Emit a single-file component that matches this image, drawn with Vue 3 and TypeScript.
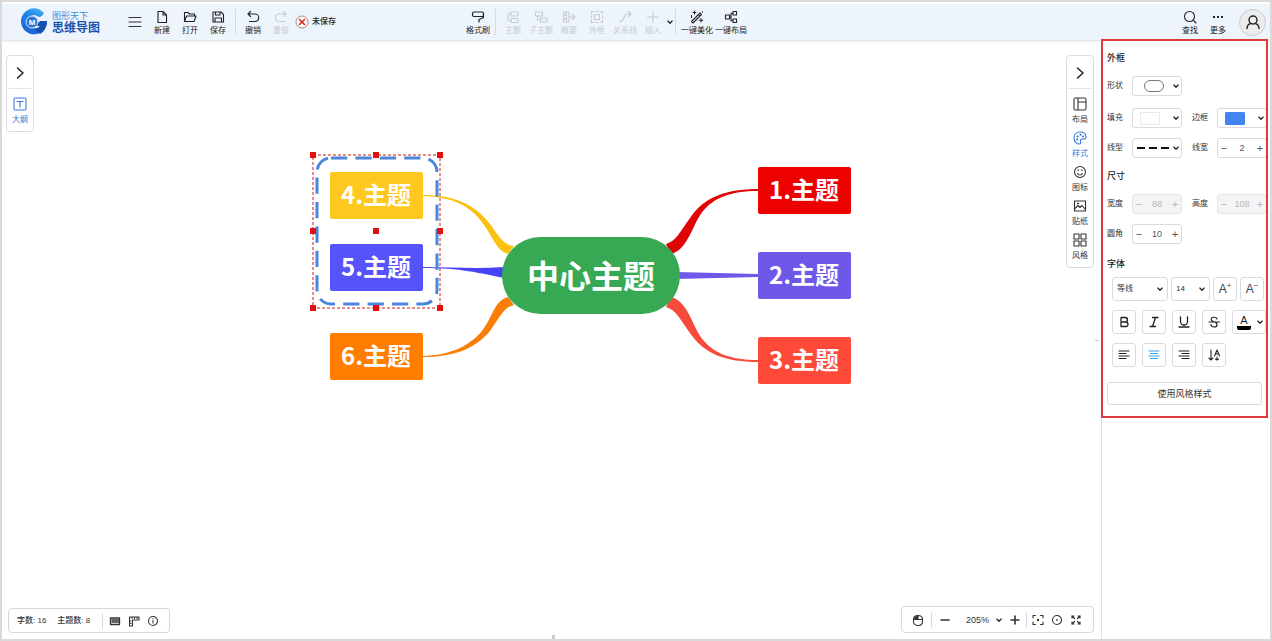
<script setup lang="ts">
import { h, ref } from 'vue'

type Shape = { d: string; fill?: boolean; w?: number }
type Tool = { icon: string; label: string; disabled?: boolean }

const shapes: Record<string, Shape[]> = {
  menu: [{ d: 'M2 3.5h12M2 8h12M2 12.5h12' }],
  file: [{ d: 'M4 2.5h5l3.5 3.5v7.5H4zM9 2.5V6h3.5' }],
  open: [{ d: 'M2.5 12.5v-9h3.5l1.5 1.5h5v2M2.5 12.5l2-5.5h9.5l-2 5.5z' }],
  save: [{ d: 'M3 3h8l2.5 2.5V13H3zM5.5 3v3h4.5V3M5 13V9h6.5v4' }],
  undo: [{ d: 'M5.5 2.5L3 5l2.5 2.5M3 5h7a3.5 3.5 0 0 1 0 7.5H4.5' }],
  redo: [{ d: 'M10.5 2.5L13 5l-2.5 2.5M13 5H6a3.5 3.5 0 0 0 0 7.5h5.5' }],
  brush: [{ d: 'M4 3h8q1.500 0 1.500 1.500v1.500q0 1.500-1.500 1.500H4q-1.500 0-1.500-1.500V4.500Q2.500 3 4 3zM13.500 6.500v2L9 10.500v2.500', w: 1.2 }],
  topic: [{ d: 'M6 3h7v4H6zM6 9.500h7v4H6zM6 5H3v6.500h3' }],
  subtopic: [{ d: 'M2.500 3h7v4h-7zM7.500 9h6.500v4H7.500zM4.500 7v4h3' }],
  summary: [{ d: 'M2.500 3h3v3h-3zM2.500 10h3v3h-3zM2.500 6.500h3v3h-3zM6 3h2v10H6M8 8h6M11.500 5.500L14 8l-2.500 2.500' }],
  frame: [
    { d: 'M2.500 5V2.500H5M7 2.500h2M11 2.500h2.500V5M13.500 7v2M13.500 11v2.500H11M9 13.500H7M5 13.500H2.500V11M2.500 9V7' },
    { d: 'M5.500 5.500h5v5h-5z' },
  ],
  relation: [{ d: 'M2 12.500h1.500C8 12.500 6 5 10.500 5H14M11.500 2.500L14 5l-2.500 2.500' }],
  plus: [{ d: 'M8 2.500v11M2.500 8h11' }],
  magic: [{ d: 'M2.500 12.500L11 4l1.500 1.500L4 14zM9.500 5.500L11 7M5.500 2v3M4 3.500h3M2.500 6.500v2M12 9.500v3.500M10.200 11.200h3.600M13.500 2.500v.5' }],
  layout: [{ d: 'M2.500 6h4v4h-4zM10 2.500h3.500V6H10zM10 10h3.500v3.500H10zM6.500 8H8M10 4.300H8v7.400h2' }],
  search: [{ d: 'M12.500 7.500a5 5 0 1 1-10 0a5 5 0 0 1 10 0zM11 11l3 3' }],
  more: [{ d: 'M3 7h2v2H3zM7 7h2v2H7zM11 7h2v2h-2z', fill: true }],
  user: [{ d: 'M12 6a4 4 0 1 1-8 0a4 4 0 0 1 8 0zM2 14.500c0-2.500 1.500-4.500 4-5.200M14 14.500c0-2.500-1.500-4.500-4-5.200', w: 1.4 }],
  right: [{ d: 'M5.500 3L11 8l-5.500 5', w: 1.5 }],
  down: [{ d: 'M4.500 6.500L8 10l3.500-3.500', w: 2 }],
  outline: [{ d: 'M3.500 2h9q1.500 0 1.500 1.500v9q0 1.500-1.500 1.500h-9Q2 14 2 12.500v-9Q2 2 3.500 2zM5 5.500h6M8 5.500V11' }],
  panel: [{ d: 'M3.500 2h9q1.500 0 1.500 1.500v9q0 1.500-1.500 1.500h-9Q2 14 2 12.500v-9Q2 2 3.500 2zM6 2v12M6 6h8' }],
  palette: [
    { d: 'M8 2C4.500 2 2 4.500 2 8s2.500 6 5.500 6c1.500 0 1.500-1.500 1-2.500c-.5-1.500.5-2.500 2-2.500h2c1.500 0 1.500-1 1.500-2C13.800 4 11.500 2 8 2z' },
    { d: 'M5.500 6.500h.1M8.500 4.800h.1M11 6.500h.1M5 9.500h.1', w: 2 },
  ],
  smile: [
    { d: 'M13.500 8a5.500 5.500 0 1 1-11 0a5.500 5.500 0 0 1 11 0zM5.500 9.500c1 2 4 2 5 0' },
    { d: 'M6.200 6.200h.1M9.800 6.200h.1', w: 1.600 },
  ],
  image: [{ d: 'M2.500 3h11v10h-11zM2.500 11l3.500-3.500l2 2l2-2l3.500 4' }, { d: 'M5.500 5.500h1', w: 1.300 }],
  grid: [{ d: 'M2 2h5v5H2zM9 2h5v5H9zM2 9h5v5H2zM9 9h5v5H9z' }],
  bold: [{ d: 'M5 3.500h4q2.500 0 2.500 2.200T9 8H5zM5 8h4.500q2.500 0 2.500 2.300t-2.500 2.200H5z', w: 1.300 }],
  italic: [{ d: 'M6.500 3.500h5.500M4 12.500h5.500M9.500 3.500l-3 9', w: 1.300 }],
  underline: [{ d: 'M4.500 3v4.500a3.500 3.500 0 0 0 7 0V3M3 13h10', w: 1.300 }],
  strike: [{ d: 'M11 5c-.5-2.200-5.500-2.500-5.800 0c-.2 2 2 2.500 3 3c4 1 3.500 5 0 5c-2 0-3.200-1-3.400-2.500M3 8h10.500', w: 1.200 }],
  alignleft: [{ d: 'M3 4h10M3 6.500h7M3 9h10M3 11.500h7', w: 1.200 }],
  aligncenter: [{ d: 'M3 4h10M4.500 6.500h7M3 9h10M4.500 11.500h7', w: 1.200 }],
  alignright: [{ d: 'M3 4h10M6 6.500h7M3 9h10M6 11.500h7', w: 1.200 }],
  textdown: [{ d: 'M5 3v10M3 11l2 2l2-2M8.500 9L11 3l2.500 6M9.300 7h3.400M11 10v3M9.500 12l1.500 1l1.500-1' }],
  keyboard: [{ d: 'M3.500 5h9v6.500h-9zM5 7h6.500M5 9h6.500', w: 1.300 }],
  ruler: [{ d: 'M3.500 4h9.500v3H6.500v6h-3zM6 4v1.500M8.500 4v1.500M11 4v1.500M3.500 8H5M3.500 10.500H5' }],
  info: [{ d: 'M12.500 8a4.500 4.500 0 1 1-9 0a4.500 4.500 0 0 1 9 0zM8 7.500v2.500M8 5.600v.1' }],
  mouse: [
    { d: 'M3.500 7.500C3.500 4.500 5 3.500 8 3.500s4.500 1 4.500 4v2c0 2.500-2 4-4.500 4s-4.500-1.500-4.500-4zM3.500 7.500h9M8 3.500v4' },
    { d: 'M4 7.500C4 5 5 4 8 4v3.500z', fill: true },
  ],
  minus: [{ d: 'M4 8h8', w: 1.600 }],
  add: [{ d: 'M8 4v8M4 8h8', w: 1.600 }],
  fit: [
    { d: 'M3 6V3.500h2.500M10.500 3.500H13V6M13 10v2.500h-2.500M5.500 12.500H3V10' },
    { d: 'M7 7h2v2H7z', fill: true },
  ],
  locate: [{ d: 'M12.500 8a4.500 4.500 0 1 1-9 0a4.500 4.500 0 0 1 9 0z' }, { d: 'M7.200 7.200h1.600v1.600H7.200z', fill: true }],
  expand: [{ d: 'M4 6V4h2M4 4l2.500 2.500M10 4h2v2M12 4L9.500 6.500M12 10v2h-2M12 12L9.500 9.500M6 12H4v-2M4 12l2.500-2.500', w: 1.200 }],
}

const Icon = (props: { name: string }) =>
  h(
    'svg',
    { viewBox: '0 0 16 16', width: 16, height: 16, 'aria-hidden': 'true' },
    shapes[props.name].map((s) =>
      h('path', {
        d: s.d,
        fill: s.fill ? 'currentColor' : 'none',
        stroke: s.fill ? 'none' : 'currentColor',
        'stroke-width': s.w ?? 1.1,
        'stroke-linecap': 'round',
        'stroke-linejoin': 'round',
      }),
    ),
  )

const fileTools: Tool[] = [
  { icon: 'file', label: '新建' },
  { icon: 'open', label: '打开' },
  { icon: 'save', label: '保存' },
]
const historyTools: Tool[] = [
  { icon: 'undo', label: '撤销' },
  { icon: 'redo', label: '重做', disabled: true },
]
const insertTools: Tool[] = [
  { icon: 'topic', label: '主题', disabled: true },
  { icon: 'subtopic', label: '子主题', disabled: true },
  { icon: 'summary', label: '概要', disabled: true },
  { icon: 'frame', label: '外框', disabled: true },
  { icon: 'relation', label: '关系线', disabled: true },
  { icon: 'plus', label: '插入', disabled: true },
]
const smartTools: Tool[] = [
  { icon: 'magic', label: '一键美化' },
  { icon: 'layout', label: '一键布局' },
]
const tabs: Tool[] = [
  { icon: 'panel', label: '布局' },
  { icon: 'palette', label: '样式' },
  { icon: 'smile', label: '图标' },
  { icon: 'image', label: '贴纸' },
  { icon: 'grid', label: '风格' },
]
const activeTab = ref('样式')

const topics = [
  { x: 330, y: 172, fill: '#ffc820', text: '4.主题' },
  { x: 330, y: 244, fill: '#5753fb', text: '5.主题' },
  { x: 330, y: 333, fill: '#ff7e00', text: '6.主题' },
  { x: 758, y: 167, fill: '#ec0000', text: '1.主题' },
  { x: 758, y: 252, fill: '#6e58e8', text: '2.主题' },
  { x: 758, y: 337, fill: '#ff4939', text: '3.主题' },
]
const links = [
  { fill: '#fcc010', d: 'M423 195C452 195 474 203 490 224C500 238 504 245 514 246L508 254C496 250 494 239 484 225C470 204 450 197 423 196Z' },
  { fill: '#4642f6', d: 'M423 267C450 267 476 269 504 267V278C480 273 460 268 423 268Z' },
  { fill: '#f97d06', d: 'M423 356C450 355 468 347 482 331C494 315 494 301 508 297L514 305C504 307 500 317 490 331C474 350 452 357 423 357Z' },
  { fill: '#e00505', d: 'M666 244C676 241 680 232 690 218C704 197 726 189 758 189V191C730 191 714 198 703 211C692 225 688 250 671 254Z' },
  { fill: '#6e58e8', d: 'M676 272L758 274V277L676 279Z' },
  { fill: '#f84a3a', d: 'M666 307C676 310 680 319 690 333C704 354 726 362 758 362V360C730 360 714 353 703 340C692 326 688 301 671 297Z' },
]
const handles = [
  [313, 155], [376, 155], [440, 155],
  [313, 231], [376, 231], [440, 231],
  [313, 308], [376, 308], [440, 308],
]

const lineWidth = ref(2)
const radius = ref(10)
const fontName = ref('等线')
const fontSize = ref('14')
const zoom = ref('205%')
</script>

<template>
  <div class="app">
    <header class="topbar">
      <a class="brand" href="#" aria-label="图形天下 思维导图">
        <svg class="logo" viewBox="0 0 28 28" width="28" height="28" aria-hidden="true">
          <defs>
            <linearGradient id="ring" x1="0.8" y1="0" x2="0.4" y2="1">
              <stop offset="0" stop-color="#41b6f5" />
              <stop offset="0.45" stop-color="#1f7ee6" />
              <stop offset="1" stop-color="#1a66d6" />
            </linearGradient>
          </defs>
          <path d="M24 5A13 13 0 1 0 27 14H19L15 18H20C17 22 9 21 8 14C8 8 14 5 19 9Q22 9 24 5Z" fill="url(#ring)" />
          <path d="M27 13H20L15 18H20Q18 21 14 21L20 26Q27 22 27 13Z" fill="#1450ae" />
          <circle cx="12" cy="14" r="6" fill="#2b78d8" stroke="#cfe5f8" />
          <text x="12" y="17" text-anchor="middle" class="mark">M</text>
        </svg>
        <span class="names"><small>图形天下</small><strong>思维导图</strong></span>
      </a>
      <button class="bare burger" aria-label="菜单"><Icon name="menu" /></button>
      <nav class="tools">
        <button v-for="t in fileTools" :key="t.label" class="tool"><Icon :name="t.icon" />{{ t.label }}</button>
        <i class="rule" />
        <button v-for="t in historyTools" :key="t.label" class="tool" :disabled="t.disabled"><Icon :name="t.icon" />{{ t.label }}</button>
      </nav>
      <p class="status">
        <svg viewBox="0 0 14 14" width="14" height="14" aria-hidden="true">
          <circle cx="7" cy="7" r="6" fill="#fff" stroke="#a88" />
          <path d="M4 4l6 6M10 4l-6 6" stroke="#dc2020" stroke-width="1.500" />
        </svg>
        未保存
      </p>
      <nav class="tools middle">
        <button class="tool"><Icon name="brush" />格式刷</button>
        <i class="rule" />
        <button v-for="t in insertTools" :key="t.label" class="tool" :disabled="t.disabled"><Icon :name="t.icon" />{{ t.label }}</button>
        <button class="bare more" aria-label="更多插入项"><Icon name="down" class="caret" /></button>
        <i class="rule" />
        <button v-for="t in smartTools" :key="t.label" class="tool wide"><Icon :name="t.icon" />{{ t.label }}</button>
      </nav>
      <nav class="tools end">
        <button class="tool"><Icon name="search" />查找</button>
        <button class="tool"><Icon name="more" />更多</button>
        <button class="avatar" aria-label="账户"><Icon name="user" /></button>
      </nav>
    </header>

    <main class="body">
      <section class="canvas">
        <svg class="map" viewBox="300 140 560 260" role="img" aria-label="思维导图画布">
          <path v-for="l in links" :key="l.d" :d="l.d" :fill="l.fill" />
          <rect x="502" y="237" width="178" height="77" rx="38" fill="#37a954" />
          <text x="591" y="288" class="root">中心主题</text>
          <g v-for="t in topics" :key="t.text">
            <rect :x="t.x" :y="t.y" width="93" height="47" rx="2" :fill="t.fill" />
            <text :x="t.x + 46" :y="t.y + 32" class="topic">{{ t.text }}</text>
          </g>
          <rect class="boundary" x="317" y="158" width="120" height="146" rx="14" pathLength="499" />
          <rect class="selection" x="313" y="155" width="127" height="153" />
          <rect v-for="p in handles" :key="p.join()" :x="p[0] - 3" :y="p[1] - 3" width="6" height="6" fill="#e01010" />
        </svg>

        <div class="edge">
          <aside class="dock">
            <button class="bare toggle" aria-label="展开大纲"><Icon name="right" /></button>
            <button class="tab active"><Icon name="outline" />大纲</button>
          </aside>
          <aside class="dock">
            <button class="bare toggle" aria-label="收起面板"><Icon name="right" /></button>
            <button v-for="t in tabs" :key="t.label" class="tab" :class="{ active: t.label === activeTab }" @click="activeTab = t.label">
              <Icon :name="t.icon" />{{ t.label }}
            </button>
          </aside>
        </div>

        <div class="edge foot">
          <div class="bar counts">
            <span>字数: 16</span><span>主题数: 8</span>
            <i class="rule" />
            <button class="bare" aria-label="快捷键"><Icon name="keyboard" /></button>
            <button class="bare" aria-label="标尺"><Icon name="ruler" /></button>
            <button class="bare" aria-label="信息"><Icon name="info" /></button>
          </div>
          <div class="bar view">
            <button class="bare" aria-label="鼠标模式"><Icon name="mouse" /></button>
            <i class="rule" />
            <button class="bare" aria-label="缩小"><Icon name="minus" /></button>
            <span class="pick zoom">
              <select v-model="zoom" aria-label="缩放比例"><option>205%</option><option>100%</option></select>
              <Icon name="down" class="caret" />
            </span>
            <button class="bare" aria-label="放大"><Icon name="add" /></button>
            <i class="rule tight" />
            <button class="bare" aria-label="适应画布"><Icon name="fit" /></button>
            <button class="bare" aria-label="定位中心"><Icon name="locate" /></button>
            <button class="bare" aria-label="全屏"><Icon name="expand" /></button>
          </div>
        </div>
        <i class="grip" />
        <i class="splitter" />
      </section>

      <aside class="side">
        <form class="props" @submit.prevent>
          <h2>外框</h2>
          <div class="fields">
            <label for="shape">形状</label>
            <button id="shape" class="box"><i class="pill" /><Icon name="down" class="caret" /></button>
          </div>
          <div class="fields second">
            <label for="fill">填充</label>
            <button id="fill" class="box"><i class="swatch" /><Icon name="down" class="caret" /></button>
            <label for="border">边框</label>
            <button id="border" class="box"><i class="swatch blue" /><Icon name="down" class="caret" /></button>
          </div>
          <div class="fields">
            <label for="line">线型</label>
            <button id="line" class="box"><i class="dashes"><b /><b /><b /></i><Icon name="down" class="caret" /></button>
            <label for="weight">线宽</label>
            <div class="box step">
              <button aria-label="减小线宽" @click="lineWidth--">−</button>
              <input id="weight" v-model="lineWidth" type="text" />
              <button aria-label="增大线宽" @click="lineWidth++">+</button>
            </div>
          </div>
          <h2>尺寸</h2>
          <div class="fields">
            <label for="width">宽度</label>
            <div class="box step off">
              <button disabled aria-label="减小宽度">−</button><input id="width" type="text" value="88" disabled /><button disabled aria-label="增大宽度">+</button>
            </div>
            <label for="height">高度</label>
            <div class="box step off">
              <button disabled aria-label="减小高度">−</button><input id="height" type="text" value="108" disabled /><button disabled aria-label="增大高度">+</button>
            </div>
          </div>
          <div class="fields">
            <label for="radius">圆角</label>
            <div class="box step">
              <button aria-label="减小圆角" @click="radius--">−</button>
              <input id="radius" v-model="radius" type="text" />
              <button aria-label="增大圆角" @click="radius++">+</button>
            </div>
          </div>
          <h2 class="font-title">字体</h2>
          <div class="row fonts">
            <span class="pick family">
              <select v-model="fontName" aria-label="字体"><option>等线</option><option>宋体</option></select>
              <Icon name="down" class="caret" />
            </span>
            <span class="pick size">
              <select v-model="fontSize" aria-label="字号"><option>14</option><option>16</option></select>
              <Icon name="down" class="caret" />
            </span>
            <button class="key letter" aria-label="增大字号">A<sup>+</sup></button>
            <button class="key letter" aria-label="减小字号">A<sup>−</sup></button>
          </div>
          <div class="row">
            <button class="key" aria-label="加粗"><Icon name="bold" /></button>
            <button class="key" aria-label="斜体"><Icon name="italic" /></button>
            <button class="key" aria-label="下划线"><Icon name="underline" /></button>
            <button class="key" aria-label="删除线"><Icon name="strike" /></button>
            <button class="key color" aria-label="文字颜色"><span class="ink">A</span><Icon name="down" class="caret" /></button>
          </div>
          <div class="row">
            <button class="key" aria-label="左对齐"><Icon name="alignleft" /></button>
            <button class="key on" aria-label="居中"><Icon name="aligncenter" /></button>
            <button class="key" aria-label="右对齐"><Icon name="alignright" /></button>
            <button class="key" aria-label="文字方向"><Icon name="textdown" /></button>
          </div>
          <button class="apply">使用风格样式</button>
        </form>
      </aside>
    </main>
  </div>
</template>

<style>
html, body { margin: 0; background: #fff; }
</style>

<style scoped>
.app, .app * { box-sizing: border-box; }
.app {
  display: flex;
  flex-direction: column;
  min-height: 100vh;
  border: 2px solid #d9d9d9;
  font: 8px/10px "Liberation Sans", "Noto Sans CJK SC", sans-serif;
  color: #333;
  background: #fff;
}
button, input, select { margin: 0; padding: 0; font: inherit; color: inherit; background: none; border: 0; border-radius: 0; }
svg { display: block; flex: none; }
.topbar {
  display: flex;
  align-items: center;
  height: 36px;
  margin-top: 2px;
  padding: 0 4px 0 18px;
  background: #edf4fb;
  box-shadow: 0 1px 2px #d8dce0;
}
.brand { display: flex; align-items: center; gap: 4px; color: #1b52ae; text-decoration: none; }
.mark { font-size: 8px; font-weight: bold; fill: #fff; }
.names { display: flex; flex-direction: column; padding-top: 2px; }
.names small { font-size: 9px; line-height: 10px; color: #3c8ddf; }
.names strong { font-size: 12px; line-height: 14px; }
.burger { margin-left: 27px; }
.bare { display: flex; align-items: center; justify-content: center; }
.tools { display: flex; align-items: center; margin-left: 5px; }
.tool {
  display: flex;
  flex-direction: column;
  align-items: center;
  gap: 1px;
  width: 28px;
  line-height: 10px;
  white-space: nowrap;
  color: #222;
}
.tool:disabled { color: #c8ccd0; }
.tool.wide { width: 34px; }
.rule { width: 1px; height: 26px; margin: 0 3px; background: #cfdbe8; }
.status { display: flex; align-items: center; gap: 3px; margin: 0; color: #222; font-weight: 500; }
.middle { margin-left: 128px; }
.more { width: 5px; }
.more + .rule { margin-right: 4px; }
.caret { width: 10px; height: 10px; color: #222; }
.end { margin-left: auto; }
.avatar {
  display: flex;
  align-items: center;
  justify-content: center;
  width: 27px;
  height: 27px;
  margin-left: 7px;
  border: 1px solid #ccc;
  border-radius: 50%;
  background: #ececee;
  color: #222;
}

.body { display: flex; flex: 1; }
.canvas {
  position: relative;
  display: flex;
  flex: 1;
  flex-direction: column;
  justify-content: space-between;
  padding: 15px 7px 4px 4px;
}
.map { position: absolute; left: 298px; top: 100px; width: 560px; height: 260px; }
.root { font: bold 32px "Noto Sans CJK SC", sans-serif; fill: #fff; text-anchor: middle; }
.topic { font: bold 24px "Noto Sans CJK SC", sans-serif; fill: #fff; text-anchor: middle; }
.boundary { fill: none; stroke: #4a86dc; stroke-width: 3; stroke-dasharray: 16 8; }
.selection { fill: none; stroke: #d01818; stroke-dasharray: 3 2; }
.edge { position: relative; display: flex; align-items: flex-start; justify-content: space-between; }
.foot { align-items: flex-end; }
.dock {
  display: flex;
  flex-direction: column;
  align-items: center;
  width: 28px;
  padding-bottom: 1px;
  border: 1px solid #dadcdf;
  border-radius: 4px;
  background: #fff;
}
.toggle { width: 22px; height: 33px; padding-top: 2px; margin-bottom: 7px; border-bottom: 1px solid #dfe4e8; color: #222; }
.tab { display: flex; flex-direction: column; align-items: center; gap: 3px; width: 26px; height: 34px; line-height: 10px; }
.tab.active { color: #3478d8; }
.bar { display: flex; align-items: center; border: 1px solid #d6d8da; border-radius: 4px; background: #fff; }
.bar .rule { height: 16px; }
.counts { width: 162px; height: 25px; margin: 0 0 2px 2px; padding-left: 8px; gap: 3px; font-weight: 500; }
.counts span { margin-right: 8px; }
.counts .rule { margin: 0 1px; }
.view { height: 27px; margin-bottom: 2px; padding: 0 9px 0 8px; gap: 3px; }
.view .rule { margin: 0 2px; }
.view .tight { margin: 0; }
.pick { position: relative; display: flex; align-items: center; }
.pick select { width: 100%; height: 100%; appearance: none; outline: 0; }
.pick .caret { position: absolute; right: 2px; pointer-events: none; }
.zoom { width: 48px; height: 20px; font-size: 9px; }
.zoom select { padding-left: 10px; }
.view .zoom .caret { right: 0; }
.grip { position: absolute; left: 50%; bottom: 0; width: 3px; height: 4px; background: #ccc; }
.splitter { position: absolute; right: 2px; top: 50%; width: 4px; height: 1px; background: #ccc; }

.side { width: 169px; border-left: 1px solid #e4dfdf; }
.props {
  margin: -1px 2px 0 -1px;
  padding: 9px 0 11px 4px;
  border: 2px solid #dc3a3c;
  background: #fff;
  overflow: hidden;
}
h2 { margin: 10px 0 0; font-size: 9px; line-height: 16px; font-weight: 500; color: #222; }
h2:first-child { margin-top: 0; }
.font-title { margin: 12px 0 -4px; }
.fields {
  display: grid;
  grid-template-columns: 25px 50px 35px 50px;
  align-items: center;
  margin-top: 10px;
}
.fields label:nth-of-type(2) { padding-left: 10px; }
.second { margin-top: 12px; }
.box {
  display: flex;
  align-items: center;
  justify-content: space-between;
  height: 20px;
  border: 1px solid #d9dbde;
  border-radius: 3px;
  background: #fff;
}
.pill { width: 20px; height: 12px; margin-left: 11px; border: 1px solid #777; border-radius: 6px; }
.swatch { width: 20px; height: 13px; margin-left: 7px; border: 1px solid #e8eaec; border-radius: 1px; background: #fff; }
.swatch.blue { border-color: #4285f0; background: #4285f0; }
.dashes { display: flex; gap: 4px; margin-left: 4px; }
.dashes b { width: 8px; height: 2px; background: #111; }
.step { font-size: 9px; color: #555; }
.step input { width: 24px; text-align: center; outline: 0; }
.step button { width: 12px; height: 18px; font-size: 11px; color: #555; }
.off { border-color: #e6e6e6; background: #f4f4f4; }
.off input, .off button { color: #b8b8b8; }
.row { display: flex; gap: 6px; margin: 9px 0 0 5px; }
.fonts { gap: 3px; }
.row .pick { height: 24px; border: 1px solid #d9dbde; border-radius: 3px; }
.row .pick select { padding-left: 4px; }
.family { width: 56px; }
.size { width: 39px; }
.key {
  display: flex;
  flex: none;
  align-items: center;
  justify-content: center;
  width: 24px;
  height: 24px;
  border: 1px solid #d9dbde;
  border-radius: 3px;
  color: #222;
}
.letter { font-size: 12px; color: #3c4350; }
.letter sup { font-size: 8px; line-height: 10px; align-self: flex-start; margin-top: 3px; }
.on { color: #3aa0e8; }
.color { width: 34px; justify-content: flex-start; gap: 4px; padding-left: 4px; }
.ink { width: 14px; border-bottom: 4px solid #000; border-radius: 2px; font-size: 11px; line-height: 12px; }
.apply {
  display: block;
  width: calc(100% - 4px);
  height: 23px;
  margin-top: 15px;
  border: 1px solid #d9dbde;
  border-radius: 3px;
  font-size: 9px;
}
</style>
